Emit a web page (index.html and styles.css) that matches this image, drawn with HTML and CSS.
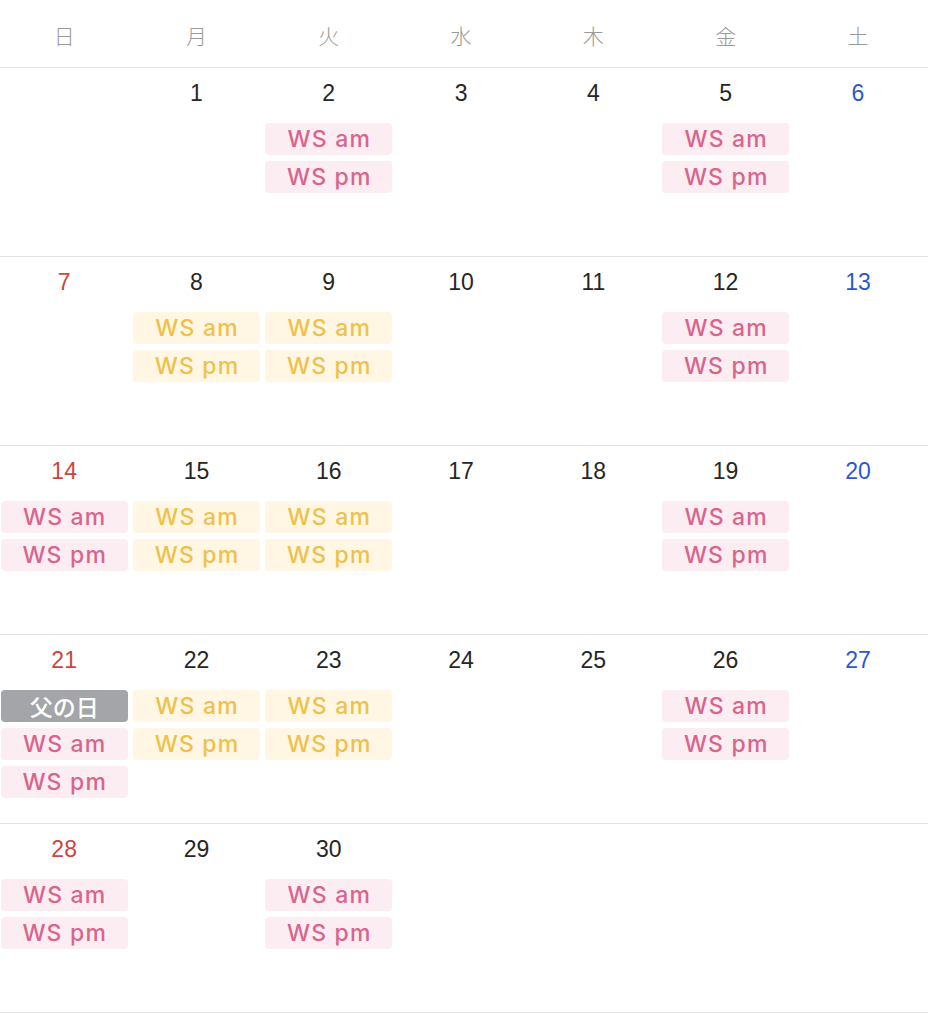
FILE: index.html
```html
<!DOCTYPE html>
<html lang="ja">
<head>
<meta charset="utf-8">
<title>カレンダー</title>
<link rel="stylesheet" href="styles.css">
</head>
<body>
<div class="cal">
  <div class="head row">
    <div class="wd">日</div><div class="wd">月</div><div class="wd">火</div><div class="wd">水</div><div class="wd">木</div><div class="wd">金</div><div class="wd">土</div>
  </div>

  <div class="week row">
    <div class="day"></div>
    <div class="day"><div class="num">1</div></div>
    <div class="day"><div class="num">2</div><div class="ev"><span class="pill pink">WS am</span><span class="pill pink">WS pm</span></div></div>
    <div class="day"><div class="num">3</div></div>
    <div class="day"><div class="num">4</div></div>
    <div class="day"><div class="num">5</div><div class="ev"><span class="pill pink">WS am</span><span class="pill pink">WS pm</span></div></div>
    <div class="day"><div class="num sat">6</div></div>
  </div>

  <div class="week row">
    <div class="day"><div class="num sun">7</div></div>
    <div class="day"><div class="num">8</div><div class="ev"><span class="pill yellow">WS am</span><span class="pill yellow">WS pm</span></div></div>
    <div class="day"><div class="num">9</div><div class="ev"><span class="pill yellow">WS am</span><span class="pill yellow">WS pm</span></div></div>
    <div class="day"><div class="num">10</div></div>
    <div class="day"><div class="num">11</div></div>
    <div class="day"><div class="num">12</div><div class="ev"><span class="pill pink">WS am</span><span class="pill pink">WS pm</span></div></div>
    <div class="day"><div class="num sat">13</div></div>
  </div>

  <div class="week row">
    <div class="day"><div class="num sun">14</div><div class="ev"><span class="pill pink">WS am</span><span class="pill pink">WS pm</span></div></div>
    <div class="day"><div class="num">15</div><div class="ev"><span class="pill yellow">WS am</span><span class="pill yellow">WS pm</span></div></div>
    <div class="day"><div class="num">16</div><div class="ev"><span class="pill yellow">WS am</span><span class="pill yellow">WS pm</span></div></div>
    <div class="day"><div class="num">17</div></div>
    <div class="day"><div class="num">18</div></div>
    <div class="day"><div class="num">19</div><div class="ev"><span class="pill pink">WS am</span><span class="pill pink">WS pm</span></div></div>
    <div class="day"><div class="num sat">20</div></div>
  </div>

  <div class="week row">
    <div class="day"><div class="num sun">21</div><div class="ev"><span class="pill gray">父の日</span><span class="pill pink">WS am</span><span class="pill pink">WS pm</span></div></div>
    <div class="day"><div class="num">22</div><div class="ev"><span class="pill yellow">WS am</span><span class="pill yellow">WS pm</span></div></div>
    <div class="day"><div class="num">23</div><div class="ev"><span class="pill yellow">WS am</span><span class="pill yellow">WS pm</span></div></div>
    <div class="day"><div class="num">24</div></div>
    <div class="day"><div class="num">25</div></div>
    <div class="day"><div class="num">26</div><div class="ev"><span class="pill pink">WS am</span><span class="pill pink">WS pm</span></div></div>
    <div class="day"><div class="num sat">27</div></div>
  </div>

  <div class="week row">
    <div class="day"><div class="num sun">28</div><div class="ev"><span class="pill pink">WS am</span><span class="pill pink">WS pm</span></div></div>
    <div class="day"><div class="num">29</div></div>
    <div class="day"><div class="num">30</div><div class="ev"><span class="pill pink">WS am</span><span class="pill pink">WS pm</span></div></div>
    <div class="day"></div>
    <div class="day"></div>
    <div class="day"></div>
    <div class="day"></div>
  </div>
</div>
</body>
</html>
```

FILE: styles.css
```css
html, body {
  margin: 0;
  padding: 0;
  background: #ffffff;
  overflow: hidden;
}

body {
  font-family: "Liberation Sans", "Noto Sans CJK JP", sans-serif;
  color: #222222;
}

.cal {
  width: 930px;
  margin-left: -2px;
}

.row {
  display: grid;
  grid-template-columns: repeat(7, 132.3px);
  border-bottom: 1px solid #e2e2e4;
}

.head {
  height: 67px;
  align-items: center;
}

.wd {
  text-align: center;
  font-family: "Noto Sans CJK JP", sans-serif;
  font-weight: 300;
  font-size: 21px;
  color: #9a9a9a;
  line-height: 26px;
  padding-top: 2px;
}

.week {
  height: 188px;
}

.day {
  display: flex;
  flex-direction: column;
  align-items: center;
  padding-top: 12px;
}

.num {
  font-size: 23px;
  line-height: 26px;
  height: 26px;
  font-weight: 400;
  color: #262626;
}

.num.sun { color: #c9473f; }
.num.sat { color: #2c57d3; }

.ev {
  display: flex;
  flex-direction: column;
  gap: 6px;
  margin-top: 17px;
}

.pill {
  display: block;
  width: 127px;
  height: 32px;
  line-height: 32px;
  border-radius: 4px;
  text-align: center;
  font-family: "Inter", "Liberation Sans", sans-serif;
  font-size: 23px;
  font-weight: 500;
  letter-spacing: 1.2px;
  text-indent: 1.2px;
}

.pill.pink {
  background: #fcedf2;
  color: #d8658c;
}

.pill.yellow {
  background: #fff6e4;
  color: #eec24a;
}

.pill.gray {
  background: #a4a5a9;
  color: #ffffff;
  font-family: "Noto Sans CJK JP", sans-serif;
  font-weight: 500;
  letter-spacing: 0;
  text-indent: 0;
}
```
